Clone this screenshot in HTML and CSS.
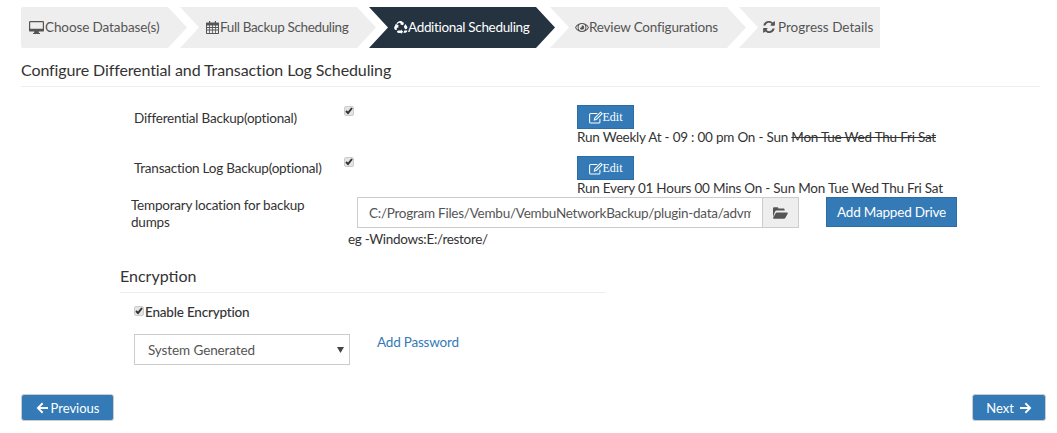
FILE: index.html
```html
<!DOCTYPE html>
<html lang="en">
<head>
<meta charset="utf-8">
<title>Additional Scheduling</title>
<link rel="stylesheet" href="styles.css">
</head>
<body>
<svg class="defs" width="0" height="0" aria-hidden="true">
  <symbol id="i-edit" viewBox="0 0 16 14"><path fill="none" stroke="currentColor" stroke-width="1.2" d="M12.500 8.500V12a1.300 1.300 0 0 1-1.300 1.300H2A1.300 1.300 0 0 1 .7 12V3.800A1.300 1.300 0 0 1 2 2.500h7.500"/><path fill="none" stroke="currentColor" stroke-width="1.200" d="M13.300 1l1.700 1.700L8.300 9.400l-2.200.5.500-2.200z"/></symbol>
  <symbol id="i-left" viewBox="0 0 12 12"><path fill="currentColor" d="M6 .6l1.300 1.300L4.200 5H12v2H4.200l3.100 3.100L6 11.400.6 6z"/></symbol>
  <symbol id="i-right" viewBox="0 0 12 12"><path fill="currentColor" d="M6 .6L4.700 1.900 7.800 5H0v2h7.800l-3.100 3.100L6 11.400 11.400 6z"/></symbol>
</svg>

<nav class="steps">
  <div class="step step-first">
    <svg class="ic ic-desktop" viewBox="0 0 15 13"><path fill="currentColor" d="M1.200 0h12.600A1.200 1.200 0 0 1 15 1.200v8.200a1.200 1.200 0 0 1-1.200 1.200H9.600l.4 1.400h1v1H4v-1h1l.4-1.400H1.200A1.200 1.200 0 0 1 0 9.400V1.200A1.200 1.200 0 0 1 1.200 0zm0 1.200v6.600h12.600V1.200z"/></svg><span>Choose Database(s)</span>
  </div>
  <div class="step step-2">
    <svg class="ic ic-cal" viewBox="0 0 13 13"><path fill="currentColor" d="M3 0h1.200v1.500h4.600V0H10v1.500h2c.6 0 1 .4 1 1V12c0 .6-.4 1-1 1H1c-.6 0-1-.4-1-1V2.500c0-.6.4-1 1-1h2zM1 4.500v1.600h2.200V4.500zm3 0v1.600h2.100V4.500zm2.900 0v1.600H9V4.500zm2.900 0v1.600H12V4.500zM1 6.900v1.700h2.200V6.900zm3 0v1.700h2.100V6.900zm2.900 0v1.700H9V6.900zm2.900 0v1.700H12V6.900zM1 9.400V12h2.200V9.400zm3 0V12h2.100V9.400zm2.900 0V12H9V9.400zm2.900 0V12H12V9.400z"/></svg><span>Full Backup Scheduling</span>
  </div>
  <div class="step step-3 is-active">
    <svg class="ic ic-rec" viewBox="0 0 14 13"><path fill="currentColor" d="M4.500.6C5.300.1 6.600-.1 7.700.3c.7.3 1.100.9 1.500 1.500l.9-.5-.9 3-3-.7.900-.5C6.600 2.500 6 1.600 5 1.800c-.7.100-1 .8-1.300 1.300L2.300 2.300zM1.700 3l2.800 1-.3 3-.8-.6-.8 1.300c-.3.500 0 1.100.6 1.200H2c-.8 0-1.600-.7-1.800-1.500C0 6.500.5 5.500 1 4.700zm9.700.1c.5.800 1.300 1.700 1.800 2.600.4 1-.1 2-1 2.400-.3.100-.6.200-1 .2l-1.400-2.500zM4 9.500h3.100V8.400l2 2.300-2 2.300v-1.100H4.500C3.500 11.900 3 11 3 10.200zm6.300-.1h3.100c-.3.900-.8 2-1.800 2.400h-2.200z"/></svg><span>Additional Scheduling</span>
  </div>
  <div class="step step-4">
    <svg class="ic ic-eye" viewBox="0 0 14 9"><path fill="currentColor" fill-rule="evenodd" d="M7 0c3 0 5.600 1.700 7 4.500C12.600 7.300 10 9 7 9S1.400 7.300 0 4.500C1.400 1.700 4 0 7 0zm0 1.100a3.400 3.400 0 1 0 0 6.800 3.400 3.400 0 0 0 0-6.800zM3 2.300A7 7 0 0 0 1.100 4.500 7 7 0 0 0 3 6.700a4.600 4.600 0 0 1 0-4.400zm8 0a4.600 4.600 0 0 1 0 4.400 7 7 0 0 0 1.900-2.200A7 7 0 0 0 11 2.300zM7 2.300a2.200 2.200 0 1 1-2.200 2.200c.4.300 1.400.2 1.700-.3.300-.5.200-1.400.5-1.900z"/></svg><span>Review Configurations</span>
  </div>
  <div class="step step-5">
    <svg class="ic ic-sync" viewBox="0 0 12 12"><path fill="currentColor" d="M6 0c1.500 0 2.800.6 3.800 1.500L11 .4c.3-.3.9-.1.900.4v3.500c0 .3-.2.500-.5.500H8c-.5 0-.7-.6-.4-.9l1-1.100A3.600 3.600 0 0 0 2.500 4.500H.3A5.800 5.800 0 0 1 6 0zM.6 7h3.400c.5 0 .7.600.4.900l-1 1.100a3.600 3.600 0 0 0 6.100-1.500h2.200A5.800 5.800 0 0 1 6 12c-1.500 0-2.800-.6-3.800-1.500L1 11.600c-.3.300-.9.100-.9-.4V7.500c0-.3.200-.5.500-.5z"/></svg><span>Progress Details</span>
  </div>
</nav>

<h1 class="page-title">Configure Differential and Transaction Log Scheduling</h1>

<section class="sched">
  <div class="sched-row">
    <label class="sched-label">Differential Backup(optional)</label>
    <div class="sched-check"><input type="checkbox" class="check" checked></div>
    <div class="sched-info">
      <button class="btn btn-edit" type="button"><svg class="ic-edit"><use href="#i-edit"/></svg>Edit</button>
      <p class="sched-text">Run Weekly At - 09 : 00 pm On - Sun <s>Mon Tue Wed Thu Fri Sat</s></p>
    </div>
  </div>
  <div class="sched-row">
    <label class="sched-label sched-label-tight">Transaction Log Backup(optional)</label>
    <div class="sched-check"><input type="checkbox" class="check" checked></div>
    <div class="sched-info">
      <button class="btn btn-edit" type="button"><svg class="ic-edit"><use href="#i-edit"/></svg>Edit</button>
      <p class="sched-text">Run Every 01 Hours 00 Mins On - Sun Mon Tue Wed Thu Fri Sat</p>
    </div>
  </div>
</section>

<section class="temp">
  <label class="temp-label">Temporary location for backup dumps</label>
  <div class="temp-main">
    <div class="temp-controls">
      <div class="input-group">
        <input class="path-input" type="text" value="C:/Program Files/Vembu/VembuNetworkBackup/plugin-data/advmssql/temp">
        <button class="addon" type="button" aria-label="Browse"><svg class="ic-folder" viewBox="0 0 15 12"><path fill="currentColor" d="M0 10V1.500C0 .7.500.2 1.200.2h3c.7 0 1.200.5 1.200 1.200h5c.7 0 1.200.5 1.200 1.200v1H3.700c-.7 0-1.200.3-1.600.9zM3.600 5.400H14c.7 0 1.100.7.700 1.300l-2.400 4.200c-.3.500-.7.800-1.300.8H.9c-.7 0-1-.7-.7-1.200l2.400-4.200c.2-.6.600-.9 1-.9z"/></svg></button>
      </div>
      <button class="btn btn-map" type="button">Add Mapped Drive</button>
    </div>
    <p class="temp-hint">eg -Windows:E:/restore/</p>
  </div>
</section>

<section class="enc">
  <h2 class="enc-title">Encryption</h2>
  <label class="enc-enable"><input type="checkbox" class="check" checked>Enable Encryption</label>
  <div class="enc-row">
    <select class="enc-select"><option>System Generated</option></select>
    <a class="enc-link" href="#">Add Password</a>
  </div>
</section>

<footer class="pager">
  <button class="btn btn-page btn-prev" type="button"><svg class="ic-arrow"><use href="#i-left"/></svg>Previous</button>
  <button class="btn btn-page btn-next" type="button">Next<svg class="ic-arrow"><use href="#i-right"/></svg></button>
</footer>
</body>
</html>
```
FILE: styles.css
```css
* { box-sizing: border-box; }
html, body { height: 100%; }
body {
  margin: 0;
  padding: 7px 11px 0 21px;
  background: #fff;
  color: #333;
  font-family: Lato, "Liberation Sans", sans-serif;
  font-size: 13.5px;
  letter-spacing: -0.22px;
  line-height: 20px;
  overflow: hidden;
}
.defs { position: absolute; }

.steps { display: flex; height: 41px; }
.step {
  display: flex;
  align-items: center;
  height: 41px;
  padding-bottom: 1px;
  background: #eee;
  color: #555;
  clip-path: polygon(0 0, calc(100% - 19px) 0, 100% 50%, calc(100% - 19px) 100%, 0 100%, 19px 50%);
}
.step-first { width: 166px; padding-left: 8px; letter-spacing: -0.1px; clip-path: polygon(0 0, calc(100% - 19px) 0, 100% 50%, calc(100% - 19px) 100%, 0 100%); border-radius: 2px; }
.step-2 { width: 196px; margin-left: -7px; padding-left: 26px; letter-spacing: -0.35px; }
.step-3 { width: 186px; margin-left: -7px; padding-left: 25px; letter-spacing: -0.33px; background: #253240; color: #fff; }
.step-4 { width: 196px; margin-left: -5px; padding-left: 25px; letter-spacing: -0.2px; }
.step-5 { width: 141px; margin-left: -7px; padding-left: 24px; letter-spacing: 0; clip-path: polygon(0 0, 100% 0, 100% 100%, 0 100%, 19px 50%); }
.ic { flex: none; margin-right: 1px; }
.ic-desktop { width: 15px; height: 13px; }
.ic-cal { width: 13px; height: 13px; }
.ic-rec { width: 14px; height: 13px; margin-right: 0; }
.ic-eye { width: 14px; height: 9px; margin-right: 0; }
.ic-sync { width: 12px; height: 12px; margin-right: 3px; }

.page-title {
  margin: 0;
  height: 39px;
  padding-top: 12px;
  border-bottom: 1px solid #eee;
  font-size: 16px;
  font-weight: 400;
  letter-spacing: -0.11px;
  line-height: 20px;
  width: 1019px;
}

.sched { display: flex; flex-direction: column; gap: 10px; padding-left: 113px; padding-top: 18px; }
.sched-row { display: flex; height: 41px; }
.sched-label { width: 210px; padding-top: 3px; }
.sched-label-tight { padding-top: 2px; }
.sched-check { width: 233px; }
.check {
  appearance: none;
  display: block;
  flex: none;
  width: 10px;
  height: 10px;
  margin: 2px 0 0;
  border: 1px solid #ccc;
  border-radius: 2px;
  background: #e4e4e4 url("data:image/svg+xml,%3Csvg xmlns='http://www.w3.org/2000/svg' viewBox='0 0 10 10'%3E%3Cpath fill='none' stroke='%23333' stroke-width='2' d='M2 5l2 2 4-5'/%3E%3C/svg%3E") center / 10px 10px no-repeat;
}
.sched-check .check { margin-top: 1px; }
.sched-text { margin: 0; height: 17px; line-height: 17px; white-space: nowrap; }

.btn {
  display: inline-flex;
  align-items: center;
  justify-content: center;
  border: 1px solid #2e6da4;
  border-radius: 0;
  background: #337ab7;
  color: #fff;
  font-family: Lato, "Liberation Sans", sans-serif;
  font-size: 13.5px;
  letter-spacing: -0.1px;
  padding: 0;
}
.btn-edit { display: flex; width: 57px; height: 24px; font-family: "Liberation Serif", serif; font-size: 12px; letter-spacing: 0; }
.ic-edit { width: 14px; height: 13px; }

.temp { display: flex; padding-left: 110px; height: 69px; }
.temp-label { width: 226px; padding-right: 40px; line-height: 17px; }
.temp-main { margin-left: -9px; }
.temp-controls { display: flex; margin-left: 9px; }
.input-group { display: flex; width: 442px; height: 31px; }
.path-input {
  width: 405px;
  height: 31px;
  border: 1px solid #ccc;
  border-right: 0;
  padding: 0 11px;
  color: #555;
  font-family: Lato, "Liberation Sans", sans-serif;
  font-size: 13.5px;
  letter-spacing: -0.25px;
  outline: 0;
}
.addon {
  width: 37px;
  height: 31px;
  padding: 0;
  display: flex;
  align-items: center;
  justify-content: center;
  border: 1px solid #ccc;
  background: #eee;
  color: #555;
}
.ic-folder { width: 15px; height: 12px; }
.btn-map { width: 131px; height: 30px; margin-left: 27px; letter-spacing: -0.2px; }
.temp-hint { margin: 1px 0 0; letter-spacing: -0.3px; }

.enc { padding-left: 99px; }
.enc-title {
  width: 486px;
  margin: 0;
  height: 27px;
  border-bottom: 1px solid #eee;
  font-size: 16px;
  font-weight: 400;
  letter-spacing: 0;
  line-height: 20px;
}
.enc-enable { display: flex; align-items: center; gap: 1px; margin: 9px 0 0 14px; font-weight: 500; height: 20px; letter-spacing: -0.2px; }
.enc-enable .check { margin: 0 0 2px; }
.enc-row { display: flex; margin: 12px 0 0 14px; }
.enc-select {
  appearance: none;
  width: 216px;
  height: 31px;
  padding-left: 13px;
  border: 1px solid #ccc;
  border-radius: 0;
  background: #fff url("data:image/svg+xml,%3Csvg xmlns='http://www.w3.org/2000/svg' viewBox='0 0 7 6'%3E%3Cpath fill='%23444' d='M0 0h7L3.500 6z'/%3E%3C/svg%3E") right 5px center / 7px 6px no-repeat;
  color: #555;
  font-family: Lato, "Liberation Sans", sans-serif;
  font-size: 13.5px;
  letter-spacing: -0.1px;
}
.enc-link { margin: -2px 0 0 27px; color: #337ab7; letter-spacing: -0.2px; text-decoration: none; }

.pager { display: flex; justify-content: space-between; width: 1025px; margin-top: 29px; }
.btn-page { height: 27px; padding: 0; border-color: #ccc; border-radius: 3px; font-size: 13px; letter-spacing: 0; }
.btn-prev { width: 93px; gap: 3px; }
.btn-next { width: 74px; gap: 6px; }
.ic-arrow { width: 12px; height: 12px; }
```
